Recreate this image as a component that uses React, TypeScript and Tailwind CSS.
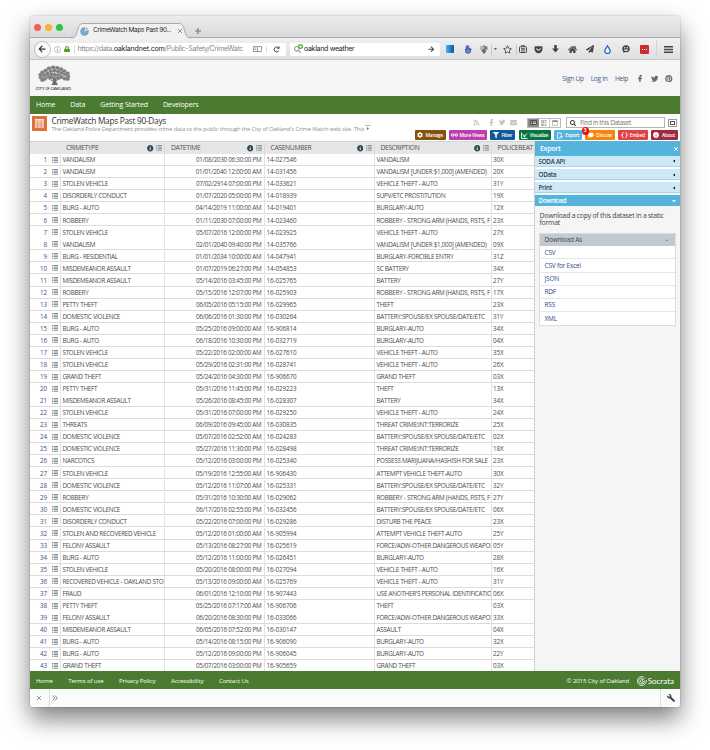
import React from "react";
import {
  FaFacebookF, FaTwitter, FaPinterest, FaCog, FaFilter, FaInfoCircle, FaComment, FaHome,
  FaGetPocket, FaLock, FaWrench, FaRss, FaEnvelope, FaRegStar,
  FaSearch, FaArrowLeft, FaArrowRight, FaPaperPlane,
} from "react-icons/fa";

type Row = [string, string, string, string, string];

const rows: Row[] = [
  ["VANDALISM", "01/08/2030 06:30:00 PM", "14-027546", "VANDALISM", "30X"],
  ["VANDALISM", "01/01/2040 12:00:00 AM", "14-031456", "VANDALISM [UNDER $1,000] (AMENDED)", "20X"],
  ["STOLEN VEHICLE", "07/02/2914 07:00:00 PM", "14-033621", "VEHICLE THEFT - AUTO", "31Y"],
  ["DISORDERLY CONDUCT", "01/07/2020 05:00:00 PM", "14-018939", "SUPV/ETC PROSTITUTION", "19X"],
  ["BURG - AUTO", "04/14/2019 11:00:00 AM", "14-019401", "BURGLARY-AUTO", "12X"],
  ["ROBBERY", "01/11/2030 07:00:00 PM", "14-023460", "ROBBERY - STRONG ARM (HANDS, FISTS, F", "23X"],
  ["STOLEN VEHICLE", "05/07/2016 12:00:00 PM", "14-023925", "VEHICLE THEFT - AUTO", "27X"],
  ["VANDALISM", "02/01/2040 09:40:00 PM", "14-035766", "VANDALISM [UNDER $1,000] (AMENDED)", "09X"],
  ["BURG - RESIDENTIAL", "01/01/2034 10:00:00 AM", "14-047941", "BURGLARY-FORCIBLE ENTRY", "31Z"],
  ["MISDEMEANOR ASSAULT", "01/07/2019 06:27:00 PM", "14-054853", "SC BATTERY", "34X"],
  ["MISDEMEANOR ASSAULT", "05/14/2016 03:45:00 PM", "16-025765", "BATTERY", "27Y"],
  ["ROBBERY", "05/15/2016 12:07:00 PM", "16-025903", "ROBBERY - STRONG ARM (HANDS, FISTS, F", "17X"],
  ["PETTY THEFT", "06/05/2016 05:15:00 PM", "16-029965", "THEFT", "23X"],
  ["DOMESTIC VIOLENCE", "06/06/2016 01:30:00 PM", "16-030264", "BATTERY:SPOUSE/EX SPOUSE/DATE/ETC", "31Y"],
  ["BURG - AUTO", "05/25/2016 09:00:00 AM", "16-906814", "BURGLARY-AUTO", "34X"],
  ["BURG - AUTO", "06/18/2016 10:30:00 PM", "16-032719", "BURGLARY-AUTO", "04X"],
  ["STOLEN VEHICLE", "05/22/2016 02:00:00 AM", "16-027610", "VEHICLE THEFT - AUTO", "35X"],
  ["STOLEN VEHICLE", "05/29/2016 02:31:00 PM", "16-028741", "VEHICLE THEFT - AUTO", "26X"],
  ["GRAND THEFT", "05/24/2016 04:30:00 PM", "16-906670", "GRAND THEFT", "03X"],
  ["PETTY THEFT", "05/31/2016 11:45:00 PM", "16-029223", "THEFT", "13X"],
  ["MISDEMEANOR ASSAULT", "05/26/2016 08:45:00 PM", "16-028307", "BATTERY", "34X"],
  ["STOLEN VEHICLE", "05/31/2016 07:00:00 PM", "16-029250", "VEHICLE THEFT - AUTO", "24X"],
  ["THREATS", "06/09/2016 09:45:00 AM", "16-030835", "THREAT CRIME:INT:TERRORIZE", "25X"],
  ["DOMESTIC VIOLENCE", "05/07/2016 02:52:00 AM", "16-024283", "BATTERY:SPOUSE/EX SPOUSE/DATE/ETC", "02X"],
  ["DOMESTIC VIOLENCE", "05/27/2016 11:30:00 PM", "16-028498", "THREAT CRIME:INT:TERRORIZE", "18X"],
  ["NARCOTICS", "05/12/2016 03:00:00 PM", "16-025340", "POSSESS MARIJUANA/HASHISH FOR SALE", "23X"],
  ["STOLEN VEHICLE", "05/19/2016 12:55:00 AM", "16-906430", "ATTEMPT VEHICLE THEFT-AUTO", "30X"],
  ["DOMESTIC VIOLENCE", "05/12/2016 11:07:00 AM", "16-025331", "BATTERY:SPOUSE/EX SPOUSE/DATE/ETC", "32Y"],
  ["ROBBERY", "05/31/2016 10:30:00 AM", "16-029062", "ROBBERY - STRONG ARM (HANDS, FISTS, F", "27Y"],
  ["DOMESTIC VIOLENCE", "06/17/2016 02:55:00 PM", "16-032456", "BATTERY:SPOUSE/EX SPOUSE/DATE/ETC", "06X"],
  ["DISORDERLY CONDUCT", "05/22/2016 07:00:00 PM", "16-029286", "DISTURB THE PEACE", "23X"],
  ["STOLEN AND RECOVERED VEHICLE", "05/12/2016 01:00:00 AM", "16-905994", "ATTEMPT VEHICLE THEFT-AUTO", "25Y"],
  ["FELONY ASSAULT", "05/13/2016 08:27:00 PM", "16-025619", "FORCE/ADW-OTHER DANGEROUS WEAPON", "05Y"],
  ["BURG - AUTO", "05/12/2016 11:00:00 PM", "16-026451", "BURGLARY-AUTO", "28X"],
  ["STOLEN VEHICLE", "05/20/2016 08:00:00 PM", "16-027094", "VEHICLE THEFT - AUTO", "16X"],
  ["RECOVERED VEHICLE - OAKLAND STOL", "05/13/2016 09:00:00 AM", "16-025769", "VEHICLE THEFT - AUTO", "31Y"],
  ["FRAUD", "06/01/2016 12:10:00 PM", "16-907443", "USE ANOTHER'S PERSONAL IDENTIFICATIO", "06X"],
  ["PETTY THEFT", "05/25/2016 07:17:00 AM", "16-906706", "THEFT", "03X"],
  ["FELONY ASSAULT", "06/20/2016 08:30:00 PM", "16-033066", "FORCE/ADW-OTHER DANGEROUS WEAPON", "33X"],
  ["MISDEMEANOR ASSAULT", "06/05/2016 07:52:00 PM", "16-030147", "ASSAULT", "04X"],
  ["BURG - AUTO", "05/14/2016 08:15:00 PM", "16-906090", "BURGLARY-AUTO", "32X"],
  ["BURG - AUTO", "05/12/2016 09:00:00 PM", "16-906045", "BURGLARY-AUTO", "22Y"],
  ["GRAND THEFT", "05/07/2016 03:00:00 PM", "16-905659", "GRAND THEFT", "03X"],
];

const unruled = new Set([7, 20, 38]);

const ListIcon = ({ className = "text-[#6c7984]" }: { className?: string }) => (
  <svg viewBox="0 0 12 12" className={`h-[6px] w-[6px] shrink-0 ${className}`} fill="currentColor">
    {[0, 3.2, 6.4, 9.6].map((y) => (
      <g key={y}>
        <rect x="0" y={y} width="2" height="1.7" />
        <rect x="3.2" y={y} width="8.8" height="1.7" />
      </g>
    ))}
  </svg>
);

function TabStrip() {
  return (
    <div className="relative flex h-[22px] shrink-0 items-center border-b border-[#a9a9a9] bg-linear-to-b from-[#ececec] to-[#d9d9d9]">
      <svg className="absolute left-[41px] top-[7px] h-[16px] w-[122px]" viewBox="0 0 130 16" preserveAspectRatio="none">
        <path d="M0 15 C5 15 5.500 12 7.500 6 C9 1 10 .5 14 .5 H114 C118 .5 119 1 120.500 6 C122.500 12 123 15 128 15 V16 H0 Z" fill="#f1f1f1" />
        <path d="M0 15 C5 15 5.500 12 7.500 6 C9 1 10 .5 14 .5 H114 C118 .5 119 1 120.500 6 C122.500 12 123 15 128 15" fill="none" stroke="#a5a5a5" strokeWidth="1" />
      </svg>
      <div className="ml-[4px] mt-[2px] flex gap-[4px]">
        <i className="h-[7px] w-[7px] rounded-full bg-[#f25e57]" />
        <i className="h-[7px] w-[7px] rounded-full bg-[#f5b32f]" />
        <i className="h-[7px] w-[7px] rounded-full bg-[#2ac540]" />
      </div>
      <svg viewBox="0 0 18 18" className="relative ml-[16.500px] mt-[9px] h-[9px] w-[9px]">
        <circle cx="9" cy="9" r="8.500" fill="#6fa3c4" />
        <circle cx="9" cy="10" r="4.500" fill="none" stroke="#8dbbd6" strokeWidth="2" />
        <path d="M9 9 L11 0 L18 5 Z" fill="#f3efe9" />
        <path d="M11 6 L13 1 L16 4 Z" fill="#e88b4d" />
      </svg>
      <span className="relative ml-[4.500px] mt-[9.500px] w-[82px] whitespace-nowrap font-[Inter] text-[6.500px] tracking-[-0.330px] text-[#2b2b2b]">CrimeWatch Maps Past 90...</span>
      <svg viewBox="0 0 8 8" className="relative ml-[3px] mt-[9px] h-[4px] w-[4px]" stroke="#777" strokeWidth="1.600"><path d="M0 0L8 8M8 0L0 8" /></svg>
      <svg viewBox="0 0 8 8" className="ml-[13px] mt-[9px] h-[6px] w-[6px]" stroke="#777" strokeWidth="1.500"><path d="M4 0V8M0 4H8" /></svg>
    </div>
  );
}

const Tool = ({ w, children }: { w: string; children?: React.ReactNode }) => (
  <span className={`flex shrink-0 items-center justify-center ${w}`}>{children}</span>
);

function Toolbar() {
  return (
    <div className="flex h-[22px] shrink-0 items-center border-b border-[#c6c6c6] bg-linear-to-b from-[#f0f0f0] to-[#dfdfdf] pt-[1px] text-[#444]">
      <div className="z-10 ml-[3.500px] flex h-[17px] w-[17px] shrink-0 items-center justify-center rounded-full border border-[#bdbdbd] bg-[#fbfbfb]">
        <FaArrowLeft className="h-[8px] w-[8px] text-[#333]" />
      </div>
      <div className="-ml-[4px] flex h-[13px] w-[239.500px] shrink-0 items-center rounded-r-[1.500px] bg-white pl-[7px]">
        <svg viewBox="0 0 14 14" className="h-[7px] w-[7px]" fill="none" stroke="#8a8a8a"><circle cx="7" cy="7" r="6.300" /><path d="M7 6V11M7 3V4.600" strokeWidth="1.600" /></svg>
        <FaLock className="ml-[3px] h-[6.500px] w-[6px] text-[#4a9e22]" />
        <i className="ml-[4px] h-[9px] w-px bg-[#ddd]" />
        <span className="ml-[3px] w-[175.500px] whitespace-nowrap pt-[1px] font-[Inter] text-[7.100px] tracking-[-0.340px] text-[#8b8b8b]">https://data.<span className="tracking-[-0.200px] text-[#222]">oaklandnet.com</span>/Public-Safety/CrimeWatc</span>
        <svg viewBox="0 0 18 13" className="h-[6.500px] w-[9px] shrink-0" fill="none" stroke="#666" strokeWidth="1.300"><path d="M1 1H8L9 2L10 1H17V11H10L9 12L8 11H1Z M9 2V12M3 4H6.500M3 7H6.500" /></svg>
        <i className="ml-[4px] h-[7px] w-px bg-[#ddd]" />
        <svg viewBox="0 0 14 14" className="ml-[5.500px] h-[7px] w-[7px] shrink-0" fill="none" stroke="#444" strokeWidth="2"><path d="M11.500 9.500A5 5 0 1 1 10.500 3" /><path d="M7.500 5.500H13V0Z" fill="#444" stroke="none" /></svg>
      </div>
      <div className="ml-[4px] flex h-[13px] w-[150px] shrink-0 items-center rounded-[1.500px] bg-white pl-[3.500px]">
        <span className="relative h-[10px] w-[10px]">
          <FaSearch className="absolute left-0 top-[2px] h-[7px] w-[7px] text-[#999]" />
          <i className="absolute left-[4.500px] top-0 h-[5px] w-[5px] rounded-full bg-[#58b526]" />
          <svg viewBox="0 0 5 5" className="absolute left-[4.500px] top-0 h-[5px] w-[5px]" stroke="#fff"><path d="M2.500 1V4M1 2.500H4" strokeWidth=".8" /></svg>
        </span>
        <span className="ml-[.5px] w-[124px] pt-[1px] font-[Inter] text-[7.100px] tracking-[-0.350px] text-[#222]">oakland weather</span>
        <FaArrowRight className="h-[6.500px] w-[6.500px]" />
      </div>
      <Tool w="w-[19px]"><i className="h-[8px] w-[8px] rounded-[1px] bg-linear-to-r from-[#45b4ee] to-[#134fae]" /></Tool>
      <Tool w="w-[17px]">
        <svg viewBox="0 0 16 18" className="h-[9px] w-[8px]"><circle cx="8" cy="11.500" r="6" fill="#4265b3" /><ellipse cx="7" cy="4" rx="4" ry="3.500" fill="#4f71bd" /><path d="M9 7L15 9M2 9L7 8" stroke="#30529e" strokeWidth="2.500" /><circle cx="8" cy="12" r="2.500" fill="none" stroke="#c2d0ef" /></svg>
      </Tool>
      <Tool w="w-[15px]">
        <svg viewBox="0 0 16 18" className="h-[9px] w-[8px]"><path d="M1 3Q5 3 8 0Q11 3 15 3V9L12 12H4L1 9Z" fill="#5f86a8" /><path d="M8 1V9H2V4Q5 4 8 1Z" fill="#e2bd45" /><path d="M8 9H14L11 13H8Z" fill="#e2bd45" /><path d="M6 8H10V12H13L8 18L3 12H6Z" fill="#5d6a70" /></svg>
      </Tool>
      <i className="h-[11px] w-px bg-[#c9c9c9]" />
      <Tool w="w-[8px]"><svg viewBox="0 0 6 4" className="h-[2px] w-[3px]"><path d="M0 0H6L3 4Z" fill="#555" /></svg></Tool>
      <Tool w="w-[16px]"><FaRegStar className="h-[9px] w-[9px]" /></Tool>
      <i className="h-[11px] w-px bg-[#c9c9c9]" />
      <Tool w="w-[13px]"><svg viewBox="0 0 16 16" className="h-[8px] w-[8px]" fill="none" stroke="#444" strokeWidth="2"><rect x="1" y="3.500" width="14" height="11.500" rx="1.500" /><path d="M5 3V1H11V3M4 7H12M4 9.500H12M4 12H12" strokeWidth="1.500" /></svg></Tool>
      <Tool w="w-[18px]"><FaGetPocket className="h-[9px] w-[9px]" /></Tool>
      <Tool w="w-[17px]"><svg viewBox="0 0 14 16" className="h-[8px] w-[7px]" fill="#444"><path d="M4.500 0H9.500V7H14L7 15L0 7H4.500Z" /></svg></Tool>
      <Tool w="w-[17px]"><FaHome className="h-[9px] w-[9px]" /></Tool>
      <Tool w="w-[17px]"><FaPaperPlane className="h-[8px] w-[8px]" /></Tool>
      <Tool w="w-[18px]"><svg viewBox="0 0 14 18" className="h-[9px] w-[7px]"><path d="M7 1.500C9 6 12.500 8 12.500 12A5.500 5 0 0 1 1.500 12C1.500 8 5 6 7 1.500Z" fill="#f5f8ff" stroke="#1c5fd6" strokeWidth="2.500" /></svg></Tool>
      <Tool w="w-[20px]">
        <svg viewBox="0 0 16 16" className="h-[8px] w-[8px]"><ellipse cx="8" cy="7.500" rx="7.500" ry="7" fill="#444" /><path d="M3 13L2 16L7 14Z" fill="#444" /><circle cx="5.500" cy="5.500" r="1.500" fill="#eee" /><circle cx="10.500" cy="5.500" r="1.500" fill="#eee" /><path d="M3.500 9H12.500Q11 12 8 12T3.500 9Z" fill="#eee" /></svg>
      </Tool>
      <Tool w="w-[17px]"><span className="flex h-[9px] w-[9px] items-center justify-center gap-px rounded-[1px] bg-[#cc2b2f]"><i className="h-px w-px bg-white" /><i className="h-px w-px bg-white" /><i className="h-px w-px bg-white" /></span></Tool>
      <i className="ml-[3px] h-[16px] w-px bg-[#d3d3d3]" />
      <Tool w="w-[23px]"><svg viewBox="0 0 18 14" className="h-[7px] w-[9px]" stroke="#444" strokeWidth="2.600"><path d="M0 1.500H18M0 7H18M0 12.500H18" /></svg></Tool>
    </div>
  );
}

function OaklandLogo() {
  return (
    <div className="ml-[5.500px] w-[38px] pt-[1px]">
      <svg viewBox="0 0 68 44" className="ml-[2px] h-[20.500px] w-[33px]">
        <path d="M26 44C32 39 31 33 30 28L38 28C37 34 37 39 43 44Z" fill="#6b6b6b" />
        <path d="M34 36L14 26M34 35L54 26M34 30L24 14M34 30L44 14M34 30V8M23 27L10 17M45 27L58 17" stroke="#777" strokeWidth="2" fill="none" />
        <g fill="#7c7c7c" stroke="#d0d0d0" strokeWidth=".5">
          {[[5, 27], [4, 21], [8, 16], [12, 22], [13, 30], [15, 12], [19, 18], [21, 25], [22, 7], [26, 13], [28, 20], [31, 5], [34, 12], [35, 21], [40, 6], [42, 14], [43, 22], [48, 9], [50, 17], [49, 26], [55, 13], [57, 20], [56, 29], [62, 18], [63, 25], [62, 30], [8, 32], [27, 27], [41, 28]].map(([x, y], i) => (
            <ellipse key={i} cx={x} cy={y} rx="4.800" ry="4" />
          ))}
        </g>
      </svg>
      <div className="mt-[1px] whitespace-nowrap font-[Lato] text-[4.600px] leading-[5px] tracking-[-0.250px] text-[#222]">CITY <span className="text-[3.500px]">OF</span> OAKLAND</div>
    </div>
  );
}

const Btn = ({ c, icon, label }: { c: string; icon: React.ReactNode; label: string }) => (
  <div className={`flex h-[10px] shrink-0 items-center justify-center gap-[2.500px] rounded-[1px] text-[4.900px] font-semibold leading-[10px] tracking-[-0.250px] text-white ${c}`}>
    {icon}
    <span className="whitespace-nowrap">{label}</span>
  </div>
);

function TitleBar() {
  return (
    <div className="flex h-[27.500px] shrink-0 justify-between bg-white">
      <div className="flex pl-[2px] pt-[2.500px]">
        <div className="flex h-[15px] w-[14.500px] items-center justify-center bg-[#e0703c]">
          <svg viewBox="0 0 18 18" className="h-[9.500px] w-[9.500px]"><rect width="18" height="18" fill="#fbe9df" /><path d="M0 4H18M0 8H18M0 11.500H18M0 15H18M5 4V18M11.500 4V18" stroke="#e0703c" strokeWidth="1.100" /></svg>
        </div>
        <div className="ml-[5px] w-[330px] whitespace-nowrap">
          <div className="text-[8.300px] leading-[10px] tracking-[-0.280px] text-[#333]">CrimeWatch Maps Past 90-Days</div>
          <div className="flex text-[5.800px] leading-[6px] tracking-[-0.150px] text-[#8e8e8e]">The Oakland Police Department provides crime data to the public through the City of Oakland's Crime Watch web site. This <i className="ml-[1px] mt-[-1px] flex h-[6px] w-[6px] justify-center border-t border-[#bbb] pt-[1px]"><svg viewBox="0 0 4 6" className="h-[3px] w-[2px]"><path d="M0 0V6L4 3Z" fill="#666" /></svg></i></div>
        </div>
      </div>
      <div className="w-[265.500px]">
        <div className="flex h-[16.500px] items-center pl-[58px] pt-[1.500px] text-[#c4c4c4]">
          <FaRss className="h-[7px] w-[7px]" />
          <FaFacebookF className="ml-[9px] h-[7px] w-[5px]" />
          <FaTwitter className="ml-[5px] h-[6.500px] w-[6.500px]" />
          <FaEnvelope className="ml-[4.500px] h-[7px] w-[7px]" />
          <div className="ml-[10.500px] flex h-[10px] w-[34px] border border-[#bbb] bg-white">
            <span className="flex w-[11px] items-center justify-center bg-[#8b8b8b]"><svg viewBox="0 0 12 10" className="h-[5px] w-[7px]" stroke="#333" strokeWidth="1.500" fill="#ccc"><path d="M0 1H12V9H0ZM0 4H12M4 1V9" /></svg></span>
            <span className="flex w-[11px] items-center justify-center"><svg viewBox="0 0 12 12" className="h-[6px] w-[6px]" fill="none" stroke="#888" strokeWidth="1.500"><path d="M1 1H5V5H1ZM1 8H5V11H1ZM7 1H11M7 4H11M7 8H11M7 11H11" /></svg></span>
            <span className="flex w-[11px] items-center justify-center border-l border-[#ccc]"><svg viewBox="0 0 12 12" className="h-[6px] w-[6px]" fill="none" stroke="#888"><path d="M1 1H11V11H1Z" /><path d="M1 2.500H11" strokeWidth="3" /></svg></span>
          </div>
          <div className="ml-[5px] flex h-[10.500px] w-[99px] items-center border border-[#b5b5b5] bg-white pl-[2.500px]">
            <FaSearch className="h-[6px] w-[6px] text-[#333]" />
            <span className="ml-[4.500px] text-[6.500px] tracking-[-0.350px] text-[#777]">Find in this Dataset</span>
          </div>
          <div className="ml-[3px] flex h-[8px] w-[9px] shrink-0 items-center justify-center border border-[#999] bg-white"><i className="h-[4px] w-[5px] border border-[#555]" /></div>
        </div>
        <div className="flex">
          <Btn c="w-[31px] bg-[#87520f]" label="Manage" icon={<FaCog className="h-[6px] w-[6px]" />} />
          <Btn c="ml-[3px] w-[38.500px] bg-[#bb3fae]" label="More Views" icon={<svg viewBox="0 0 14 8" className="-mr-[1px] h-[4px] w-[7px]" fill="none" stroke="#fff" strokeWidth="2"><circle cx="3.500" cy="4" r="2.500" /><circle cx="10.500" cy="4" r="2.500" /></svg>} />
          <Btn c="ml-[3px] w-[25px] bg-[#11599b]" label="Filter" icon={<FaFilter className="h-[6px] w-[6px]" />} />
          <Btn c="ml-[3.500px] w-[32.500px] bg-[#0a7440]" label="Visualize" icon={<svg viewBox="0 0 14 14" className="-mr-[1px] h-[7px] w-[7px]" fill="none" stroke="#fff" strokeWidth="1.800"><path d="M1 1V13H13M3 4L7 9L12 3" /><circle cx="7" cy="9" r="1.200" /></svg>} />
          <Btn c="ml-[3px] w-[28px] bg-[#52b3dc]" label="Export" icon={<svg viewBox="0 0 14 14" className="h-[7px] w-[6px]" fill="none" stroke="#fff" strokeWidth="1.800"><path d="M9 13H1V1H10V6M7 9H13M11 7V13" /></svg>} />
          <div className="relative ml-[3px]">
            <Btn c="w-[30px] bg-[#fb8204]" label="Discuss" icon={<FaComment className="h-[6px] w-[6px]" />} />
            <span className="absolute -left-[3.500px] -top-[3px] flex h-[7.500px] w-[7.500px] items-center justify-center rounded-full bg-[#df1616] text-[5px] font-bold leading-none text-white">3</span>
          </div>
          <Btn c="ml-[3px] w-[29.500px] bg-[#e04246]" label="Embed" icon={<svg viewBox="0 0 14 12" className="-mr-[.5px] h-[6px] w-[7px]" fill="none" stroke="#fff" strokeWidth="2"><path d="M5 1Q3 1 3 3Q3 6 1 6Q3 6 3 9Q3 11 5 11M9 1Q11 1 11 3Q11 6 13 6Q11 6 11 9Q11 11 9 11" /></svg>} />
          <Btn c="ml-[3px] w-[27.500px] bg-[#9e2b3e]" label="About" icon={<FaInfoCircle className="h-[6px] w-[6px]" />} />
        </div>
      </div>
    </div>
  );
}

const Head = ({ w, label, icons = true }: { w: string; label: string; icons?: boolean }) => (
  <div className={`flex shrink-0 items-center border-r border-[#dadada] pl-[6px] pr-[2px] ${w}`}>
    <span className="flex-1 whitespace-nowrap">{label}</span>
    {icons && <><FaInfoCircle className="mr-[2.500px] h-[6.500px] w-[6.500px] shrink-0 text-[#2f4750]" /><ListIcon className="text-[#7b8d96]" /></>}
  </div>
);

function DataGrid() {
  return (
    <div className="w-[504.500px] shrink-0 overflow-hidden border-r border-[#d0d0d0] bg-white">
      <div className="flex h-[13px] border-t border-[#d5d5d5] bg-[#e6e6e6] pt-[.5px] text-[6.700px] tracking-[-0.300px] text-[#4e4e4e]">
        <div className="w-[30px] shrink-0" />
        <Head w="w-[105px]" label="CRIMETYPE" />
        <Head w="w-[99.500px]" label="DATETIME" />
        <Head w="w-[110px]" label="CASENUMBER" />
        <Head w="w-[117px]" label="DESCRIPTION" />
        <Head w="w-[50px]" label="POLICEBEAT" icons={false} />
      </div>
      {rows.map((r, i) => (
        <div key={i} className={`flex h-[12.060px] items-center border-b pt-[.5px] text-[6.300px] leading-[11px] tracking-[-0.150px] text-[#4b4b4b] whitespace-nowrap *:shrink-0 ${unruled.has(i + 1) ? "border-transparent" : "border-[#dcdcdc]"}`}>
          <div className="w-[17px] text-right tracking-[-0.150px] text-[#3d5080]">{i + 1}</div>
          <div className="flex w-[13.500px] justify-end border-r border-[#e2e2e2] py-[2.500px] pr-[2px]"><ListIcon /></div>
          <div className="w-[104.500px] overflow-hidden border-r border-[#e2e2e2] pl-[2px] tracking-[-0.280px]">{r[0]}</div>
          <div className="w-[99.500px] border-r border-[#e2e2e2] pr-[2px] text-right tracking-[-0.250px]">{r[1]}</div>
          <div className="w-[110px] border-r border-[#e2e2e2] pl-[2px] tracking-[-0.250px]"><span className="tracking-[-0.100px]">{r[2]}</span></div>
          <div className="w-[117px] overflow-hidden border-r border-[#e2e2e2] pl-[2px] tracking-[-0.270px]">{r[3]}</div>
          <div className="pl-[1.500px]">{r[4]}</div>
        </div>
      ))}
    </div>
  );
}

const Section = ({ label }: { label: string }) => (
  <div className="mb-[2px] flex h-[11.300px] items-center justify-between border-b border-[#a9d5e9] bg-[#cce9f5] pl-[4px] pr-[5px] pt-[1.500px] text-[6.200px] font-semibold tracking-[-0.220px] text-[#2c4450]">
    {label}
    <svg viewBox="0 0 4 6" className="h-[4px] w-[2.500px]"><path d="M4 0V6L0 3Z" fill="#111" /></svg>
  </div>
);

function ExportPanel() {
  return (
    <div className="flex-1 bg-[#f5f5f5]">
      <div className="flex h-[14.500px] items-center justify-between bg-[#55b4dc] pl-[5.500px] pr-[2px] pt-[1px] text-[7px] font-semibold tracking-[-0.300px] text-white">Export<svg viewBox="0 0 8 8" className="h-[4px] w-[4px]" stroke="#fff" strokeWidth="2"><path d="M0 0L8 8M8 0L0 8" /></svg></div>
      <div className="bg-white">
        <Section label="SODA API" />
        <Section label="OData" />
        <Section label="Print" />
      </div>
      <div className="flex h-[11px] items-center justify-between bg-[#55b4dc] pl-[4px] pr-[4.500px] text-[6.200px] font-semibold tracking-[-0.300px] text-white">Download<svg viewBox="0 0 6 4" className="h-[2.500px] w-[4px]"><path d="M0 0H6L3 4Z" fill="#fff" /></svg></div>
      <p className="whitespace-nowrap pl-[5px] pt-[7px] text-[6.900px] leading-[6.400px] tracking-[-0.250px] text-[#444]">Download a copy of this dataset in a static<br />format</p>
      <div className="ml-[4px] mt-[7px] w-[137px] border border-[#d9dce0] bg-white text-[6.500px] tracking-[-0.200px]">
        <div className="flex h-[12px] items-center justify-between bg-[#c2c9d3] pl-[5px] pr-[6px] text-[#444]">Download As<svg viewBox="0 0 6 4" className="h-[2px] w-[4px]"><path d="M0 4H6L3 0Z" fill="#8b929c" /></svg></div>
        {["CSV", "CSV for Excel", "JSON", "RDF", "RSS", "XML"].map((t) => (
          <div key={t} className="flex h-[13.200px] items-center border-b border-[#e4e6e9] pl-[5px] pt-[.5px] text-[#2f4a85] last:border-0">{t}</div>
        ))}
      </div>
    </div>
  );
}

export default function App() {
  return (
    <div className="h-[750px] w-[710px] overflow-hidden bg-white pl-[30px] pt-[16px] font-['Open_Sans','Noto_Sans',sans-serif]">
      <div className="flex h-[691px] w-[650px] flex-col overflow-hidden rounded-[3px] bg-[#f5f5f5] shadow-[0_12px_24px_rgba(0,0,0,0.5),0_0_2px_rgba(0,0,0,0.3)]">
        <TabStrip />
        <Toolbar />
        <header className="flex h-[35.500px] shrink-0 items-center justify-between bg-[#f5f5f5]">
          <OaklandLogo />
          <div className="flex items-center pr-[7.500px] pt-[2px] text-[6.600px] tracking-[-0.300px] text-[#42598c]">
            <span>Sign Up</span><span className="ml-[7px]">Log In</span><span className="ml-[7.500px]">Help</span>
            <span className="flex items-center text-[#6a6a6a]">
              <FaFacebookF className="ml-[9px] h-[7.500px] w-[6px]" />
              <FaTwitter className="ml-[7.500px] h-[7.500px] w-[7.500px]" />
              <FaPinterest className="ml-[7px] h-[7.500px] w-[7.500px]" />
            </span>
          </div>
        </header>
        <nav className="flex h-[18px] shrink-0 items-center gap-[15px] bg-[#4a7b30] pl-[6px] pt-[1px] text-[7px] font-medium tracking-[-0.120px] text-white">
          <span>Home</span><span>Data</span><span>Getting Started</span><span>Developers</span>
        </nav>
        <TitleBar />
        <main className="flex min-h-0 flex-1 overflow-hidden">
          <DataGrid />
          <ExportPanel />
        </main>
        <footer className="flex h-[18px] shrink-0 items-center bg-[#4a7b30] pl-[6px] pt-[1px] text-[6.100px] font-medium tracking-[-0.120px] text-white">
          <span>Home</span><span className="ml-[15.500px]">Terms of use</span><span className="ml-[15.500px]">Privacy Policy</span><span className="ml-[15.500px]">Accessibility</span><span className="ml-[15.500px]">Contact Us</span>
          <span className="ml-auto">© 2015 City of Oakland</span>
          <svg viewBox="0 0 20 20" className="ml-[7.500px] h-[10px] w-[10px]" fill="none" stroke="#fff" strokeWidth="1.500"><path d="M13 1.600A9 9 0 1 0 18.500 8" /><path d="M12 4.500A6 6 0 1 0 15.500 9" /><path d="M11 7A3 3 0 1 0 13 10" /><path d="M10 10L16 3" /></svg>
          <span className="ml-[1px] mr-[6px] font-[Lato] text-[8px] font-normal tracking-normal">Socrata</span>
        </footer>
        <div className="flex h-[18px] shrink-0 items-center bg-[#fbfbfb] text-[#666]">
          <span className="flex h-full w-[19.500px] items-center justify-center border-r border-[#ddd]"><svg viewBox="0 0 8 8" className="h-[4px] w-[4px]" stroke="#777" strokeWidth="1.500"><path d="M0 0L8 8M8 0L0 8" /></svg></span>
          <svg viewBox="0 0 12 12" className="ml-[2px] h-[6px] w-[6px]" fill="none" stroke="#666" strokeWidth="1.500"><path d="M1 1L5.500 6L1 11M6 1L10.500 6L6 11" /></svg>
          <span className="ml-auto flex h-full w-[20px] items-center justify-center border-l border-[#ddd]"><FaWrench className="h-[8px] w-[8px] -scale-x-100 text-[#444]" /></span>
        </div>
      </div>
    </div>
  );
}
